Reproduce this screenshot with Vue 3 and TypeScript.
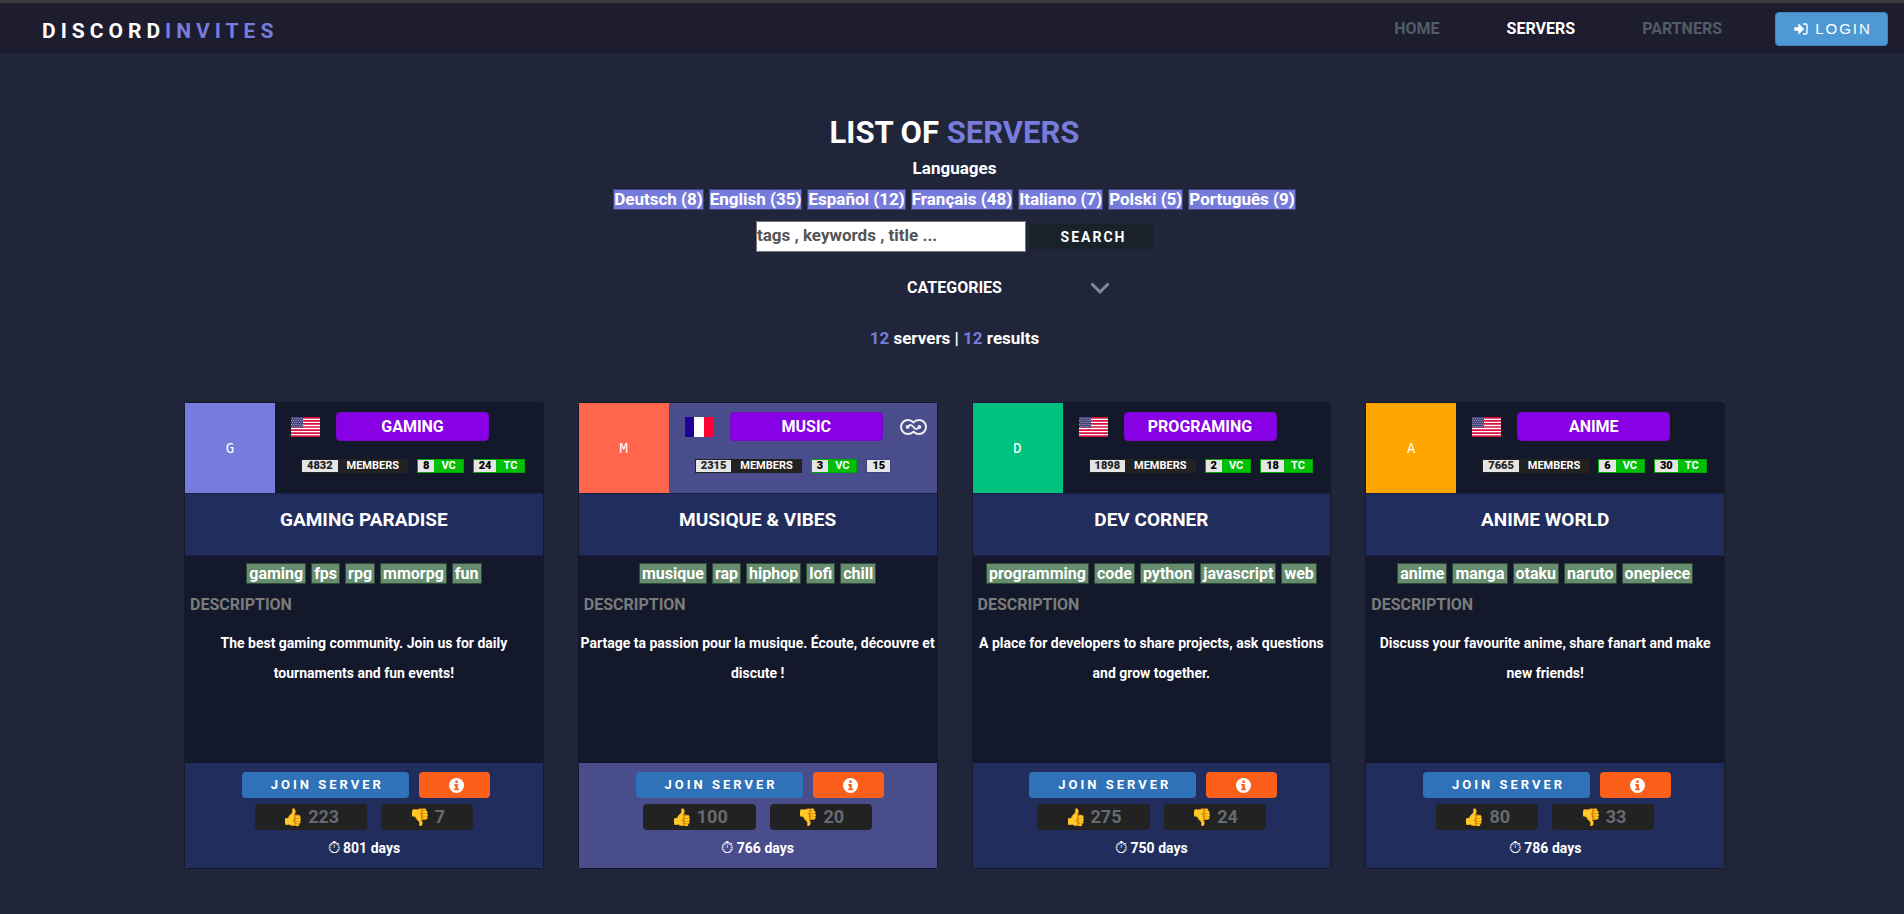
<script setup lang="ts">
import { ref } from 'vue'

interface Language { name: string; count: number }
interface Server {
  letter: string
  color: string
  flag: 'us' | 'fr'
  category: string
  premium: boolean
  members: number
  vc: number
  tc: number
  name: string
  tags: string[]
  description: string
  up: number
  down: number
  days: number
}

const links = [
  { label: 'HOME', active: false },
  { label: 'SERVERS', active: true },
  { label: 'PARTNERS', active: false },
]

const languages: Language[] = [
  { name: 'Deutsch', count: 8 },
  { name: 'English', count: 35 },
  { name: 'Español', count: 12 },
  { name: 'Français', count: 48 },
  { name: 'Italiano', count: 7 },
  { name: 'Polski', count: 5 },
  { name: 'Português', count: 9 },
]

const query = ref('')
const total = 12

const servers: Server[] = [
  { letter: 'G', color: 'violet', flag: 'us', category: 'GAMING', premium: false, members: 4832, vc: 8, tc: 24, name: 'GAMING PARADISE', tags: ['gaming', 'fps', 'rpg', 'mmorpg', 'fun'], description: 'The best gaming community. Join us for daily tournaments and fun events!', up: 223, down: 7, days: 801 },
  { letter: 'M', color: 'coral', flag: 'fr', category: 'MUSIC', premium: true, members: 2315, vc: 3, tc: 15, name: 'MUSIQUE & VIBES', tags: ['musique', 'rap', 'hiphop', 'lofi', 'chill'], description: 'Partage ta passion pour la musique. Écoute, découvre et discute !', up: 100, down: 20, days: 766 },
  { letter: 'D', color: 'green', flag: 'us', category: 'PROGRAMING', premium: false, members: 1898, vc: 2, tc: 18, name: 'DEV CORNER', tags: ['programming', 'code', 'python', 'javascript', 'web'], description: 'A place for developers to share projects, ask questions and grow together.', up: 275, down: 24, days: 750 },
  { letter: 'A', color: 'orange', flag: 'us', category: 'ANIME', premium: false, members: 7665, vc: 6, tc: 30, name: 'ANIME WORLD', tags: ['anime', 'manga', 'otaku', 'naruto', 'onepiece'], description: 'Discuss your favourite anime, share fanart and make new friends!', up: 80, down: 33, days: 786 },
]
</script>

<template>
  <div class="page">
    <header class="navbar">
      <a class="brand" href="#">DISCORD<span class="accent">INVITES</span></a>
      <nav class="nav">
        <a v-for="l in links" :key="l.label" href="#" class="nav-link" :class="{ active: l.active }">{{ l.label }}</a>
        <button type="button" class="login">
          <svg class="login-icon" viewBox="0 0 14 12" aria-hidden="true">
            <path d="M0.3 4.2h4V1.4c0-.5.5-.7.9-.4l4.6 4.5c.3.3.3.7 0 1L5.2 11c-.4.3-.9.1-.9-.4V7.8h-4z" fill="currentColor" />
            <path d="M9 1h2.4c.9 0 1.6.7 1.6 1.6v6.8c0 .9-.7 1.6-1.6 1.6H9" fill="none" stroke="currentColor" stroke-width="1.4" />
          </svg>
          <span>LOGIN</span>
        </button>
      </nav>
    </header>

    <main class="main">
      <section class="intro">
        <h1 class="heading">LIST OF <span class="accent">SERVERS</span></h1>
        <h2 class="label">Languages</h2>
        <div class="languages">
          <a v-for="l in languages" :key="l.name" href="#" class="language">{{ l.name }} ({{ l.count }})</a>
        </div>
        <form class="search" @submit.prevent>
          <input v-model="query" class="search-input" type="text" aria-label="Search servers" placeholder="tags , keywords , title ...">
          <button type="submit" class="search-button">SEARCH</button>
        </form>
        <button type="button" class="categories">
          <span></span>
          <span>CATEGORIES</span>
          <svg class="chevron" viewBox="0 0 20 12" aria-hidden="true">
            <path d="M1.500 1.500L10 10L18.500 1.500" fill="none" stroke="currentColor" stroke-width="3" />
          </svg>
        </button>
        <p class="results"><span class="accent">{{ total }}</span> servers | <span class="accent">{{ total }}</span> results</p>
      </section>

      <section class="cards">
        <article v-for="s in servers" :key="s.name" class="card" :class="{ premium: s.premium }">
          <div class="head">
            <div class="avatar" :class="s.color">{{ s.letter }}</div>
            <div class="info">
              <div class="info-top">
                <svg v-if="s.flag === 'us'" class="flag" viewBox="0 0 29 20" role="img" aria-label="English">
                  <rect width="29" height="20" fill="#fff" />
                  <path d="M0 .8h29M0 3.800h29M0 6.900h29M0 10h29M0 13.100h29M0 16.200h29M0 19.200h29" stroke="#d80f3c" stroke-width="1.700" />
                  <rect width="12" height="10.500" fill="#46437a" />
                  <path d="M1 1.500h11M1 5.500h11M1 9.300h11M0 3.500h12M0 7.500h12" stroke="#a9a8c8" stroke-width=".9" stroke-dasharray="1 1.200" />
                </svg>
                <svg v-else class="flag" viewBox="0 0 29 20" role="img" aria-label="Français">
                  <rect width="29" height="20" fill="#fff" />
                  <rect width="9" height="20" fill="#200095" />
                  <rect x="19" width="10" height="20" fill="#ff0032" />
                </svg>
                <a href="#" class="category">{{ s.category }}</a>
                <svg v-if="s.premium" class="premium-icon" viewBox="0 0 27 16" aria-hidden="true">
                  <path d="M13.500 3.300C11.900 1.800 10 1 8 1a7 7 0 0 0 0 14c2 0 3.900-.8 5.500-2.300C15.100 14.200 17 15 19 15a7 7 0 0 0 0-14c-2 0-3.900.8-5.500 2.300z" fill="none" stroke="#eee" stroke-width="2" />
                  <path d="M7.600 8C10.500 4.500 12 6.300 13.500 8S16.500 11.500 19.400 8" fill="none" stroke="#eee" stroke-width="1.800" />
                  <circle cx="7.600" cy="8" r="1.900" fill="#eee" />
                  <circle cx="19.400" cy="8" r="1.900" fill="#eee" />
                </svg>
              </div>
              <div class="stats">
                <span class="stat members"><b class="num">{{ s.members }}</b><span class="unit">MEMBERS</span></span>
                <span class="stat channel"><b class="num">{{ s.vc }}</b><span class="unit">VC</span></span>
                <span class="stat" :class="s.premium ? 'bare' : 'channel'"><b class="num">{{ s.tc }}</b><span v-if="!s.premium" class="unit">TC</span></span>
              </div>
            </div>
          </div>
          <h3 class="name">{{ s.name }}</h3>
          <div class="body">
            <div class="tags">
              <a v-for="t in s.tags" :key="t" href="#" class="tag">{{ t }}</a>
            </div>
            <h4 class="desc-title">DESCRIPTION</h4>
            <p class="desc">{{ s.description }}</p>
          </div>
          <footer class="foot">
            <div class="actions">
              <button type="button" class="join">JOIN SERVER</button>
              <button type="button" class="details" aria-label="Server details">
                <svg class="details-icon" viewBox="0 0 15 15" aria-hidden="true">
                  <circle cx="7.500" cy="7.500" r="7.500" fill="#fff" />
                  <path d="M6.300 2.600h2.500v2.300H6.300zM5.300 6h3.500v4.400h1.100v1.900H5.200v-1.900h1.200V7.900H5.300z" fill="#fb5f1a" />
                </svg>
              </button>
            </div>
            <div class="votes">
              <button type="button" class="vote"><span class="emoji">👍</span> {{ s.up }}</button>
              <button type="button" class="vote"><span class="emoji">👎</span> {{ s.down }}</button>
            </div>
            <p class="age"><span class="clock">⏱</span> {{ s.days }} days</p>
          </footer>
        </article>
      </section>
    </main>
  </div>
</template>

<style>
body {
  margin: 0;
  background: #202539;
}
</style>

<style scoped>
.page {
  box-sizing: border-box;
  min-height: 100vh;
  background: #202539;
  color: #fff;
  font: 700 16px/24px Roboto, "Open Sans", sans-serif;
}
a {
  color: inherit;
  text-decoration: none;
}
h1, h2, h3, h4, p {
  margin: 0;
  font-weight: 700;
}
button, input {
  font: inherit;
  color: inherit;
}
button {
  border: 0;
  padding: 0;
  cursor: pointer;
}
.accent {
  color: #767cdb;
}
.navbar {
  display: flex;
  align-items: center;
  justify-content: space-between;
  box-sizing: border-box;
  height: 53px;
  padding: 0 16px 0 42px;
  border-top: 3px solid #3c3b3f;
  background: #1d1d2f;
}
.brand {
  font-size: 21px;
  line-height: 30px;
  letter-spacing: 5px;
  padding-top: 5px;
}
.nav {
  display: flex;
  align-items: center;
}
.nav-link {
  color: #525c66;
  margin-right: 67px;
  padding-top: 2px;
}
.nav-link:nth-of-type(3) {
  margin-right: 53px;
}
.nav-link.active {
  color: #fff;
}
.login {
  display: flex;
  align-items: center;
  justify-content: center;
  gap: 7px;
  box-sizing: border-box;
  width: 113px;
  height: 34px;
  margin-top: 2px;
  padding-left: 3px;
  border: 1px solid #4184bd;
  border-radius: 4px;
  background: #4e99d3;
  font: 400 15px/20px "Liberation Sans", sans-serif;
  letter-spacing: 2px;
}
.login-icon {
  width: 14px;
  height: 12px;
}
.main {
  padding-left: 5px;
}
.intro {
  display: flex;
  flex-direction: column;
  align-items: center;
}
.heading {
  margin-top: 60px;
  font-size: 31px;
  line-height: 40px;
}
.label {
  margin-top: 3px;
  font-size: 17px;
}
.languages {
  display: flex;
  flex-wrap: wrap;
  justify-content: center;
  gap: 5px;
  margin-top: 9px;
}
.language {
  border: 1px solid #41437a;
  background: #767cdb;
  font-size: 17px;
  line-height: 19px;
}
.search {
  display: flex;
  align-items: center;
  gap: 4px;
  margin-top: 11px;
}
.search-input {
  box-sizing: border-box;
  width: 270px;
  height: 31px;
  padding: 0 0 3px;
  border: 1px solid #767676;
  border-radius: 0;
  background: #fff;
  color: #222;
  font-size: 17px;
}
.search-input::placeholder {
  color: #555;
  opacity: 1;
}
.search-button {
  width: 123px;
  height: 25px;
  padding-left: 4px;
  background: #19222a;
  font-size: 14px;
  letter-spacing: 2px;
}
.categories {
  display: grid;
  grid-template-columns: 1fr auto 1fr;
  align-items: center;
  width: 310px;
  margin-top: 24px;
  background: transparent;
}
.chevron {
  justify-self: end;
  width: 20px;
  height: 12px;
  color: #7d8a94;
}
.results {
  margin-top: 26px;
  font-size: 17px;
}
.cards {
  display: grid;
  grid-template-columns: repeat(4, minmax(0, 1fr));
  gap: 34px;
  max-width: 1541px;
  margin: 52px auto 45px;
}
.card {
  display: flex;
  flex-direction: column;
  border: 1px solid #13182b;
  border-radius: 4px;
  background: #13182b;
}
.head {
  display: flex;
  height: 90px;
}
.avatar {
  display: flex;
  align-items: center;
  justify-content: center;
  width: 90px;
  flex: none;
  font: 400 14px/16px "DejaVu Sans Mono", monospace;
}
.violet { background: #767cdb; }
.coral { background: #ff664c; }
.green { background: #00c180; }
.orange { background: #ffa500; }
.info {
  flex: 1;
  min-width: 0;
}
.premium .info {
  background: #4a4d8b;
}
.info-top {
  display: flex;
  align-items: center;
  padding: 9px 0 0 16px;
}
.flag {
  width: 29px;
  height: 20px;
  flex: none;
}
.category {
  box-sizing: border-box;
  width: 153px;
  margin-left: 16px;
  border: 1px solid #7a06cb;
  border-radius: 4px;
  background: #8800e4;
  text-align: center;
  line-height: 27px;
}
.premium-icon {
  width: 27px;
  height: 16px;
  margin-left: 17px;
}
.stats {
  display: flex;
  gap: 9px;
  padding: 18px 0 0 26px;
  font-size: 11px;
  line-height: 12px;
}
.stat {
  display: flex;
  border: 1px solid #222;
}
.num {
  padding: 0 5px;
  background: #e5e5e5;
  color: #000;
}
.members .num {
  color: #222;
}
.unit {
  padding: 0 7px;
}
.members .unit {
  padding: 0 8px 0 9px;
}
.members {
  background: #222;
}
.channel {
  border-color: #00a505;
  background: #00bf06;
}
.bare {
  border-color: #3f4280;
}
.name {
  box-sizing: border-box;
  height: 63px;
  padding-top: 14px;
  border: solid #1a2145;
  border-width: 1px 0;
  background: #212d5c;
  font-size: 19px;
  text-align: center;
}
.body {
  flex: 1;
  min-height: 207px;
}
.tags {
  display: flex;
  justify-content: center;
  gap: 5px;
  padding-top: 7px;
}
.tag {
  padding: 0 2px;
  border: 1px solid #304a3a;
  background: #668d6e;
  line-height: 19px;
}
.desc-title {
  padding: 9px 5px 0;
  color: #7b7b7b;
  font-size: 16px;
}
.desc {
  padding: 11px 1px 0;
  font-size: 14px;
  line-height: 30px;
  text-align: center;
}
.foot {
  display: flex;
  flex-direction: column;
  align-items: center;
  box-sizing: border-box;
  height: 105px;
  padding-top: 9px;
  background: #212d5c;
}
.premium .foot {
  background: #4a4d8b;
}
.actions {
  display: flex;
  gap: 10px;
  padding-left: 4px;
}
.join {
  width: 167px;
  height: 26px;
  padding-left: 4px;
  border-radius: 4px;
  background: #2f72b8;
  font-size: 13px;
  letter-spacing: 3px;
}
.details {
  display: flex;
  align-items: center;
  justify-content: center;
  width: 71px;
  height: 26px;
  padding-left: 4px;
  border-radius: 4px;
  background: #fb5f1a;
}
.details-icon {
  width: 15px;
  height: 15px;
}
.votes {
  display: flex;
  gap: 14px;
  margin-top: 6px;
}
.vote {
  height: 26px;
  padding: 0 28px;
  border-radius: 4px;
  background: #222;
  color: #666a72;
  font-size: 18px;
  line-height: 24px;
}
.emoji {
  font-size: 17px;
  font-family: "Noto Color Emoji", sans-serif;
}
.age {
  margin-top: 6px;
  font-size: 14px;
}
.clock {
  font-size: 16px;
  font-weight: 400;
}
</style>
